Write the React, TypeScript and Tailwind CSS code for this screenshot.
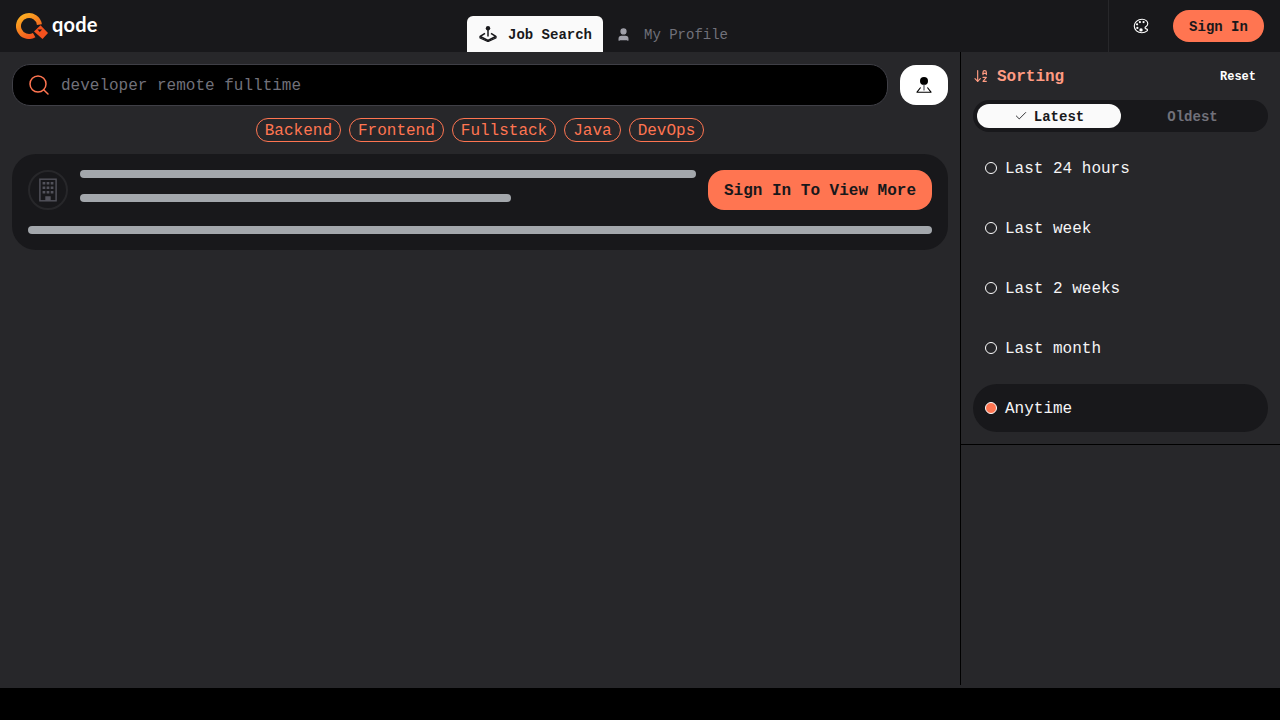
import React from "react";
import { ArrowDownAZ, Check, Search, User } from "lucide-react";
import { IoColorPaletteOutline } from "react-icons/io5";

const mono = { fontFamily: '"Liberation Mono", monospace' };
const chips = ["Backend", "Frontend", "Fullstack", "Java", "DevOps"];
const ranges = ["Last 24 hours", "Last week", "Last 2 weeks", "Last month", "Anytime"];

const Joystick = ({ className }: { className?: string }) => (
  <svg viewBox="0 0 18 16" className={className} fill="none">
    <circle cx="9" cy="2.2" r="2.2" fill="currentColor" />
    <path d="M9 4v6.5" stroke="currentColor" strokeWidth="1.5" />
    <path d="M6 7.4 1.2 10.4 9 14.4l7.8-4-4.8-3" stroke="currentColor" strokeWidth="1.7" strokeLinejoin="round" />
    <path d="M1 10.8v1.2L9 15.6l8-3.6v-1.2" stroke="currentColor" strokeWidth="1.2" strokeLinejoin="round" />
  </svg>
);

const PinStick = ({ className }: { className?: string }) => (
  <svg viewBox="0 0 16 16" className={className} fill="none">
    <circle cx="8" cy="4" r="4" fill="currentColor" />
    <path d="M8 7.5v6" stroke="#71717a" strokeWidth="1.4" />
    <path d="M4.6 10.5 1 15.2h14l-3.6-4.7" stroke="currentColor" strokeWidth="1.1" strokeLinejoin="round" />
  </svg>
);

const Logo = () => (
  <svg viewBox="0 0 32 27" className="h-[27px] w-[32px] shrink-0" fill="none">
    <defs>
      <linearGradient id="qodeGrad" x1="0.2" y1="0" x2="0.8" y2="1">
        <stop offset="0" stopColor="#fbab22" />
        <stop offset="1" stopColor="#f4511e" />
      </linearGradient>
    </defs>
    <path d="M23.4 12.6A10.5 10.5 0 1 0 18.2 23.1" stroke="url(#qodeGrad)" strokeWidth="5" />
    <path d="M18 19.5 24.5 13.2 32 21 26.5 27Z" fill="#f4511e" />
    <path d="M21.5 17.4h4.6l-2.3 2.6z" fill="#18181b" />
  </svg>
);

const App: React.FC = () => {
  return (
    <div className="h-[720px] w-[1280px] overflow-hidden bg-black text-white" style={mono}>
      <div className="flex h-[688px] flex-col bg-[#27272a]">
        <header className="flex h-[52px] shrink-0 bg-[#18181b]">
          <div className="flex w-[467px] items-start gap-[4px] pl-[16px] pt-[12px]">
            <Logo />
            <span
              className="text-xl font-bold leading-[24px] tracking-[0.2px] text-white"
              style={{ fontFamily: "Lato, sans-serif" }}
            >
              qode
            </span>
          </div>
          <div className="flex flex-1 items-end">
            <div className="flex h-[36px] w-[136px] items-center gap-[11px] rounded-t-md bg-[#fafafa] pl-[12px] text-sm font-bold text-[#18181b]">
              <Joystick className="h-[16px] w-[18px]" />
              <span className="mt-[2px]">Job Search</span>
            </div>
            <div className="flex h-[36px] items-center gap-[13px] pl-[13px] text-sm text-[#71717a]">
              <User className="h-[15px] w-[15px] fill-[#a1a1aa] text-[#a1a1aa]" />
              <span className="mt-[1px]">My Profile</span>
            </div>
          </div>
          <div className="flex w-[172px] items-center justify-between border-l border-[#27272a] pl-[23px] pr-[16px]">
            <IoColorPaletteOutline className="h-[18px] w-[18px] text-white" />
            <button className="h-[32px] w-[91px] rounded-full bg-[#ff7551] pt-[2px] text-sm font-bold text-[#18181b]">
              Sign In
            </button>
          </div>
        </header>

        <div className="flex h-[633px]">
          <main className="flex w-[960px] flex-col p-[12px]">
            <div className="flex items-center gap-[12px]">
              <div className="flex h-[42px] flex-1 items-center gap-[10px] rounded-[18px] border border-[#3f3f46] bg-black pl-[14px]">
                <Search className="h-[24px] w-[24px] text-[#ff7551]" strokeWidth={1.5} />
                <span className="mt-[2px] text-base text-[#71717a]">developer remote fulltime</span>
              </div>
              <button className="flex h-[40px] w-[48px] items-center justify-center rounded-2xl bg-white text-black">
                <PinStick className="h-[16px] w-[16px]" />
              </button>
            </div>

            <div className="mt-[12px] flex justify-center gap-[8px]">
              {chips.map((chip) => (
                <span
                  key={chip}
                  className="flex h-[24px] items-center rounded-full border border-[#ff7551] px-[8px] pt-[2px] text-base text-[#ff7551]"
                >
                  {chip}
                </span>
              ))}
            </div>

            <div className="mt-[12px] rounded-[24px] bg-[#18181b] p-[16px]">
              <div className="flex gap-[12px]">
                <div className="flex h-[40px] w-[40px] shrink-0 items-center justify-center rounded-full border-2 border-[#27272a]">
                  <svg viewBox="0 0 20 26" className="h-[24px] w-[18px]" fill="none">
                    <rect x="1" y="1" width="18" height="24" stroke="#52525b" strokeWidth="1.6" />
                    <path
                      d="M4 4h3v3H4zM8.5 4h3v3h-3zM13 4h3v3h-3zM4 9h3v3H4zM8.5 9h3v3h-3zM13 9h3v3h-3zM4 14h3v3H4zM8.5 14h3v3h-3zM13 14h3v3h-3zM7 20h6v5H7z"
                      fill="#52525b"
                    />
                  </svg>
                </div>
                <div className="flex w-[616px] shrink-0 flex-col gap-[16px]">
                  <div className="h-[8px] w-full rounded-full bg-[#a3a7ac]" />
                  <div className="h-[8px] w-[431px] rounded-full bg-[#a3a7ac]" />
                </div>
                <button className="h-[40px] flex-1 rounded-2xl bg-[#ff7551] pt-[2px] text-base font-bold text-[#18181b]">
                  Sign In To View More
                </button>
              </div>
              <div className="mt-[16px] h-[8px] rounded-full bg-[#a3a7ac]" />
            </div>
          </main>

          <aside className="w-[320px] border-l border-black">
            <div className="border-b border-black px-[12px] pb-[12px]">
              <div className="flex h-[48px] items-center justify-between">
                <div className="flex items-center gap-[8px] text-[#ff9b82]">
                  <ArrowDownAZ className="h-[16px] w-[16px]" strokeWidth={1.75} />
                  <span className="mt-[2px] text-base font-bold">Sorting</span>
                </div>
                <span className="mt-[2px] pr-[12px] text-xs font-bold text-white">Reset</span>
              </div>
              <div className="flex h-[32px] items-center rounded-full bg-[#18181b] p-[4px] text-sm font-bold">
                <div className="flex h-[24px] w-[144px] items-center justify-center gap-[6px] rounded-full bg-[#fafafa] text-[#18181b]">
                  <Check className="h-[14px] w-[14px]" strokeWidth={1.5} />
                  <span className="mt-[1px]">Latest</span>
                </div>
                <div className="mt-[1px] flex-1 text-center text-[#71717a]">Oldest</div>
              </div>
              <div className="mt-[12px] flex flex-col gap-[12px]">
                {ranges.map((range) => {
                  const active = range === "Anytime";
                  return (
                    <div
                      key={range}
                      className={`flex h-[48px] items-center gap-[8px] rounded-[24px] pl-[12px] text-base ${
                        active ? "bg-[#18181b]" : ""
                      }`}
                    >
                      <span
                        className={`h-[12px] w-[12px] rounded-full border border-white ${
                          active ? "bg-[#ff7551]" : ""
                        }`}
                      />
                      <span className="mt-[2px] text-[#f4f4f5]">{range}</span>
                    </div>
                  );
                })}
              </div>
            </div>
          </aside>
        </div>
      </div>
    </div>
  );
};

export default App;
